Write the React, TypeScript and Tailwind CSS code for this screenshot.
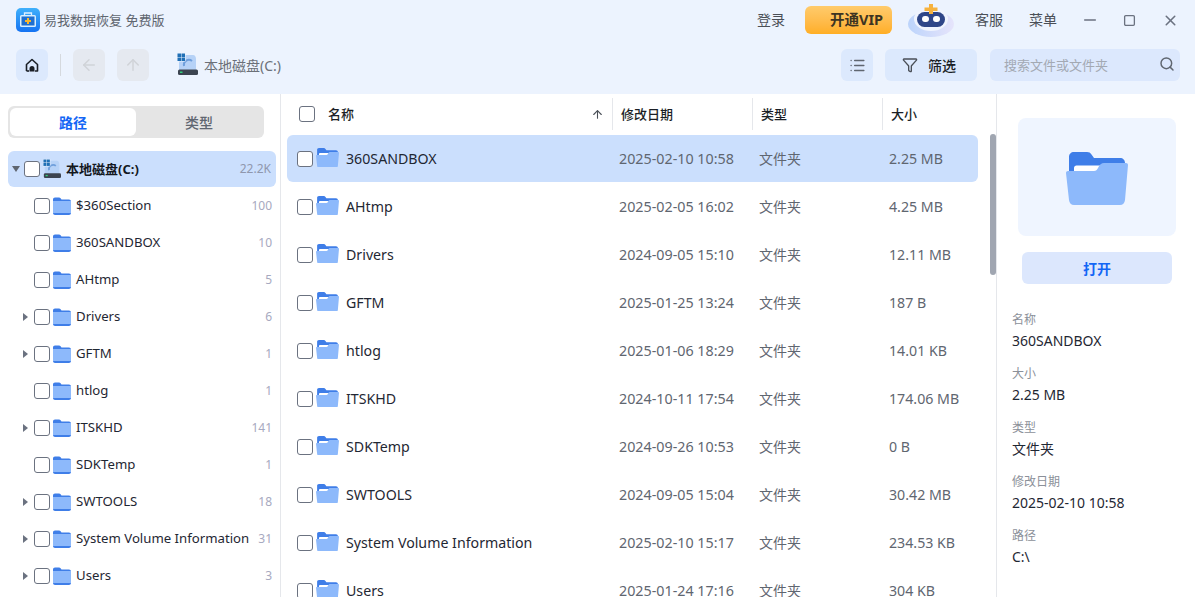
import { ArrowLeft, ArrowUp, List, Minus, Search, Square, X, Funnel } from "lucide-react";

const treeRows = [
    { name: "$360Section", count: "100", arrow: false },
    { name: "360SANDBOX", count: "10", arrow: false },
    { name: "AHtmp", count: "5", arrow: false },
    { name: "Drivers", count: "6", arrow: true },
    { name: "GFTM", count: "1", arrow: true },
    { name: "htlog", count: "1", arrow: false },
    { name: "ITSKHD", count: "141", arrow: true },
    { name: "SDKTemp", count: "1", arrow: false },
    { name: "SWTOOLS", count: "18", arrow: true },
    { name: "System Volume Information", count: "31", arrow: true },
    { name: "Users", count: "3", arrow: true },
];

const fileRows = [
    { name: "360SANDBOX", date: "2025-02-10 10:58", size: "2.25 MB" },
    { name: "AHtmp", date: "2025-02-05 16:02", size: "4.25 MB" },
    { name: "Drivers", date: "2024-09-05 15:10", size: "12.11 MB" },
    { name: "GFTM", date: "2025-01-25 13:24", size: "187 B" },
    { name: "htlog", date: "2025-01-06 18:29", size: "14.01 KB" },
    { name: "ITSKHD", date: "2024-10-11 17:54", size: "174.06 MB" },
    { name: "SDKTemp", date: "2024-09-26 10:53", size: "0 B" },
    { name: "SWTOOLS", date: "2024-09-05 15:04", size: "30.42 MB" },
    { name: "System Volume Information", date: "2025-02-10 15:17", size: "234.53 KB" },
    { name: "Users", date: "2025-01-24 17:16", size: "304 KB" },
];

const details = [
    { label: "名称", value: "360SANDBOX" },
    { label: "大小", value: "2.25 MB" },
    { label: "类型", value: "文件夹" },
    { label: "修改日期", value: "2025-02-10 10:58" },
    { label: "路径", value: "C:\\" },
];

const Check = () => (
    <span className="block w-4 h-4 shrink-0 rounded-[3px] border border-[#6b7280] bg-white" />
);

const FlatFolder = () => (
    <svg width="18" height="18" viewBox="0 0 18 18" className="shrink-0">
        <path d="M0 2.500C0 1.400.8.500 2 .500h4c.7 0 1.200.3 1.600.8L8.500 2.500H16c1.100 0 2 .9 2 2V16c0 1.100-.9 2-2 2H2c-1.100 0-2-.9-2-2Z" fill="#3f7ee8" />
        <rect x="0" y="4" width="18" height="12" fill="#8db9fb" />
    </svg>
);

const OpenFolder = ({ size = 23 }: { size?: number }) => (
    <svg width={size} height={size * 0.855} viewBox="0 0 62 53" className="shrink-0">
        <path d="M3 5c0-3 2-5 5-5h13c2 0 3.500.8 4.500 2.500L28 6h26c3 0 5 2 5 5v20H3Z" fill="#3f7ee8" />
        <path d="M8 16c0-1.500 1-2.500 2.500-2.500H36V30H8Z" fill="#ffffff" />
        <path d="M0 21c0-1.200.8-2 2-2h26c2 0 3-1 4-3 1.500-3.500 3.500-5 6-5h22c1.200 0 2 .8 2 2L59 48c-.3 3-2.300 5-5 5H8c-2.700 0-4.700-2-5-5Z" fill="#8db9fb" />
    </svg>
);

const DriveIcon = ({ w = 21, h = 22 }: { w?: number; h?: number }) => (
    <svg width={w} height={h} viewBox="0 0 21 22" className="shrink-0">
        <path d="M2 18V6c0-2 1-4 3-4h11c2 0 3 2 3 4v12Z" fill="#b6d2f7" />
        <path d="M7 13a5 5 0 0 1 8-5" fill="none" stroke="#6f9fdc" strokeWidth="2" />
        <rect x="1" y="16.500" width="20" height="5.500" rx="1.500" fill="#3c4450" />
        <rect x="3" y="18.500" width="2.500" height="1.500" fill="#31d17c" />
        <rect x="0" y="0" width="8.500" height="8.500" fill="#ecf3fe" />
        <rect x="0.500" y="0.500" width="3.500" height="3.500" fill="#1f6fb5" />
        <rect x="4.500" y="0.500" width="3.500" height="3.500" fill="#1f6fb5" />
        <rect x="0.500" y="4.500" width="3.500" height="3.500" fill="#1f6fb5" />
        <rect x="4.500" y="4.500" width="3.500" height="3.500" fill="#1f6fb5" />
    </svg>
);

const HomeIcon = () => (
    <svg width="16" height="16" viewBox="0 0 16 16" className="shrink-0">
        <path d="M2.500 14V7.500L8 2.500l5.500 5V14H11" fill="none" stroke="#1b1f26" strokeWidth="1.600" strokeLinejoin="round" />
        <path d="M2.500 14H5" fill="none" stroke="#1b1f26" strokeWidth="1.600" />
        <path d="M5.500 14.500v-3a2.500 2.500 0 0 1 5 0v3Z" fill="#1b1f26" />
    </svg>
);

const Logo = () => (
    <svg width="24" height="24" viewBox="0 0 24 24" className="shrink-0">
        <defs>
            <linearGradient id="logoBg" x1="0" y1="0" x2="0" y2="1">
                <stop offset="0" stopColor="#3fb0fb" />
                <stop offset="1" stopColor="#1573f2" />
            </linearGradient>
        </defs>
        <rect width="24" height="24" rx="5" fill="url(#logoBg)" />
        <path d="M8.500 7V5h7v2" fill="none" stroke="#dff1ff" strokeWidth="1.300" />
        <rect x="4" y="7" width="16" height="12" rx="1.500" fill="#d7eeff" />
        <rect x="5.500" y="8.500" width="13" height="9" fill="#1f6fd0" />
        <path d="M11 10h2v2h2v2h-2v2h-2v-2H9v-2h2Z" fill="#fbb62c" />
    </svg>
);

const Robot = () => (
    <svg width="46" height="33" viewBox="0 0 46 33" className="shrink-0">
        <defs>
            <linearGradient id="robotGlow" x1="0" y1="0" x2="1" y2="0">
                <stop offset="0" stopColor="#bcd4fb" />
                <stop offset="1" stopColor="#e6e4fb" />
            </linearGradient>
        </defs>
        <ellipse cx="23" cy="20" rx="23" ry="13" fill="url(#robotGlow)" />
        <ellipse cx="23" cy="15" rx="17" ry="12" fill="#f0f4fe" />
        <rect x="9" y="8" width="28" height="15" rx="7.500" fill="#2f4688" />
        <rect x="14" y="12" width="7" height="6" rx="3" fill="#ffffff" />
        <rect x="25" y="12" width="7" height="6" rx="3" fill="#ffffff" />
        <path d="M21 0h4v3.500h4.500V7H25v3h-4V7h-4.500V3.500H21Z" fill="#f6b23e" />
    </svg>
);

export default function App() {
    return (
        <div className="h-[597px] w-[1195px] overflow-hidden bg-white flex flex-col text-[14px] text-[#1f2733] font-['Noto_Sans','Noto_Sans_CJK_SC',sans-serif]">
            <header className="h-[94px] shrink-0 bg-[#ecf3fe]">
                <div className="h-[40px] flex items-center pl-4 pr-4">
                    <Logo />
                    <span className="ml-1 pt-[2px] text-[13px] text-[#5f6670]">易我数据恢复 免费版</span>
                    <span className="ml-auto pb-[2px] text-[#4a4f57]">登录</span>
                    <button className="ml-5 w-[87px] h-7 rounded-md bg-gradient-to-b from-[#ffcb6b] to-[#ffae23] text-[14.500px] text-[#3d3422] font-bold pl-[25px] text-left">
                        开通VIP
                    </button>
                    <span className="ml-4"><Robot /></span>
                    <span className="ml-[21px] pb-[2px] text-[#4a4f57]">客服</span>
                    <span className="ml-[26px] pb-[2px] text-[#4a4f57]">菜单</span>
                    <Minus size={18} strokeWidth={2.2} className="ml-6 text-[#6b7280]" />
                    <Square size={13} strokeWidth={2.4} className="ml-[24px] text-[#6b7280]" />
                    <X size={17} strokeWidth={2.2} className="ml-[26px] text-[#6b7280]" />
                </div>
                <div className="h-[32px] mt-[9px] flex items-center pl-4 pr-[15px]">
                    <button className="w-8 h-8 rounded-md bg-[#dce9fd] flex items-center justify-center">
                        <HomeIcon />
                    </button>
                    <span className="mx-3 w-px h-[22px] bg-[#d5d9de]" />
                    <button className="w-8 h-8 rounded-md bg-[#e5e9f0] flex items-center justify-center">
                        <ArrowLeft size={18} className="text-[#d0d3d8]" />
                    </button>
                    <button className="ml-3 w-8 h-8 rounded-md bg-[#e5e9f0] flex items-center justify-center">
                        <ArrowUp size={18} className="text-[#d0d3d8]" />
                    </button>
                    <span className="ml-[28px] mb-[2px]"><DriveIcon /></span>
                    <span className="ml-[6px] pt-[1px] text-[14px] text-[#6b7078]">本地磁盘(C:)</span>
                    <button className="ml-auto w-8 h-8 rounded-md bg-[#dce9fd] flex items-center justify-center">
                        <List size={17} className="text-[#5f6670]" />
                    </button>
                    <button className="ml-3 w-[92px] h-8 rounded-md bg-[#dce9fd] flex items-center pl-[17px] gap-[10px]">
                        <Funnel size={16} className="text-[#4a4f57]" />
                        <span className="pt-[1px] text-[14px] font-medium text-[#1b1f26]">筛选</span>
                    </button>
                    <div className="ml-[13px] w-[190px] h-8 rounded-md bg-[#dce8fd] flex items-center pl-[14px] pr-[5px]">
                        <span className="pt-[2px] text-[13px] text-[#a3a9b3]">搜索文件或文件夹</span>
                        <Search size={16} strokeWidth={2.2} className="ml-auto mb-[2px] text-[#5f6670]" />
                    </div>
                </div>
            </header>

            <div className="flex-1 flex min-h-0">
                <aside className="w-[281px] shrink-0 border-r border-[#e5e7eb] pt-3 px-2">
                    <div className="w-[256px] h-8 rounded-md bg-[#e5e5e5] p-0.5 flex items-center text-[14px]">
                        <div className="w-[126px] h-7 pt-[1px] rounded-md bg-white flex items-center justify-center font-bold text-[#1366f5]">路径</div>
                        <div className="flex-1 pt-[1px] text-center font-medium text-[#5f6670]">类型</div>
                    </div>
                    <div className="mt-[13px] h-9 w-[268px] rounded-md bg-[#cbdffd] flex items-center pr-[5px]">
                        <svg width="8" height="6" viewBox="0 0 8 6" className="ml-1 shrink-0"><path d="M0 0h8L4 6Z" fill="#5f6670" /></svg>
                        <span className="ml-1"><Check /></span>
                        <span className="ml-[3px] mb-[2px]"><DriveIcon w={18} h={19} /></span>
                        <span className="ml-[5px] pt-px text-[13px] font-bold text-[#14181f]">本地磁盘(C:)</span>
                        <span className="ml-auto text-[12px] text-[#8f97ad]">22.2K</span>
                    </div>
                    {treeRows.map((row) => (
                        <div key={row.name} className="h-[37px] w-[264px] flex items-center relative pl-[26px]">
                            {row.arrow && (
                                <svg width="5" height="8" viewBox="0 0 5 8" className="absolute left-[14.500px]"><path d="M0 0l5 4-5 4Z" fill="#6b7280" /></svg>
                            )}
                            <Check />
                            <span className="ml-[3px]"><FlatFolder /></span>
                            <span className="ml-[5px] pt-[1px] text-[13.200px] text-[#1f2733] whitespace-nowrap">{row.name}</span>
                            <span className="ml-auto pt-[1px] text-[12px] text-[#a7a9c0]">{row.count}</span>
                        </div>
                    ))}
                </aside>

                <main className="w-[716px] shrink-0 border-r border-[#e5e7eb] relative">
                    <div className="h-10 flex items-center text-[13px] font-medium text-[#1b1f26]">
                        <div className="w-[332px] flex items-center pl-[18px] border-r border-[#e5e7eb] h-8">
                            <Check />
                            <span className="ml-[13px] pt-px">名称</span>
                            <ArrowUp size={13} className="ml-auto mr-[8px] text-[#4a4f57]" />
                        </div>
                        <div className="w-[140px] h-8 pt-px flex items-center pl-2 border-r border-[#e5e7eb]">修改日期</div>
                        <div className="w-[130px] h-8 pt-px flex items-center pl-2 border-r border-[#e5e7eb]">类型</div>
                        <div className="pl-2 pt-px">大小</div>
                    </div>
                    <div className="pl-1.5 mt-[1px]">
                        {fileRows.map((file, i) => (
                            <div
                                key={file.name}
                                className={`w-[691px] h-[47px] mb-px flex items-center rounded-md pl-[10px] text-[#1f2733] ${i === 0 ? "bg-[#cbdffd]" : ""}`}
                            >
                                <Check />
                                <span className="ml-[3px] mb-[2px]"><OpenFolder /></span>
                                <span className="ml-[7px] w-[273px] text-[14.200px] whitespace-nowrap">{file.name}</span>
                                <span className="w-[140px] text-[14.300px] text-[#5f6670]">{file.date}</span>
                                <span className="w-[130px] text-[14px] text-[#5f6670]">文件夹</span>
                                <span className="text-[14.200px] text-[#5f6670]">{file.size}</span>
                            </div>
                        ))}
                    </div>
                    <span className="absolute left-[709px] top-[40px] w-1.5 h-[141px] rounded-full bg-[#a0a6b1]" />
                </main>

                <section className="flex-1 min-w-0 pt-6">
                    <div className="ml-[21px] w-[158px] h-[118px] pt-[3px] rounded-lg bg-[#eff5ff] flex items-center justify-center">
                        <OpenFolder size={62} />
                    </div>
                    <button className="mt-4 ml-[25px] w-[150px] h-8 pt-px rounded-md bg-[#dce7fd] text-[14px] font-bold text-[#1366f5]">打开</button>
                    <div className="mt-[25px] pl-[15px]">
                        {details.map((item) => (
                            <div key={item.label} className="h-[54px]">
                                <div className="h-[22px] flex items-center text-[12px] text-[#8b9099]">{item.label}</div>
                                <div className="h-[22px] pb-[3px] flex items-center text-[14px] text-[#1f2733]">{item.value}</div>
                            </div>
                        ))}
                    </div>
                </section>
            </div>
        </div>
    );
}
